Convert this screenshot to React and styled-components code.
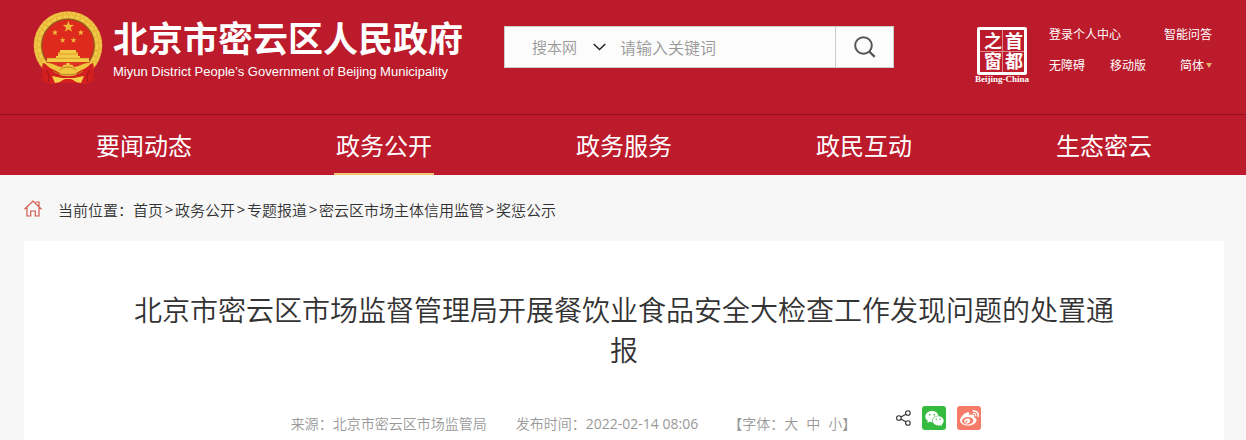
import styled, { createGlobalStyle } from 'styled-components'
import { AiFillWechat } from 'react-icons/ai'
import { FaWeibo } from 'react-icons/fa'

const GlobalStyle = createGlobalStyle`
  * {
    box-sizing: border-box;
  }
  body {
    margin: 0;
    background: #f7f7f7;
    color: #333;
    font-family: 'Open Sans', 'Noto Sans CJK SC', sans-serif;
  }
  a {
    color: inherit;
    text-decoration: none;
  }
`

const Header = styled.header`
  background: #bc1b2c;
  color: #fff;
`
const Top = styled.div`
  display: flex;
  align-items: flex-start;
  height: 114px;
  padding: 10px 34px 0 33px;
`
const Brand = styled.a`
  display: flex;
  gap: 10px;
`
const BrandText = styled.div`
  padding-top: 6px;
`
const SiteName = styled.div`
  font-size: 35px;
  font-weight: 700;
  line-height: 46px;
  white-space: nowrap;
`
const SiteNameEn = styled.div`
  font-family: 'Liberation Sans', Arial, sans-serif;
  font-size: 13px;
  line-height: 20px;
  white-space: nowrap;
`
const SearchForm = styled.form`
  display: flex;
  flex: 0 1 390px;
  height: 42px;
  margin: 16px auto 0 41px;
  background: #fcfcfc;
  border: 1px solid #ccc;
`
const ScopeBox = styled.div`
  display: flex;
  align-items: center;
  padding-left: 27px;
  color: #222;
`
const Scope = styled.select`
  appearance: none;
  width: 61px;
  padding: 0;
  border: 0;
  background: none;
  color: #999;
  font-family: inherit;
  font-size: 15px;
  font-weight: 350;
`
const Keyword = styled.input`
  flex: 1;
  min-width: 0;
  padding: 2px 0 0 14px;
  border: 0;
  background: none;
  font-family: inherit;
  font-size: 16px;
  outline: 0;
  &::placeholder {
    color: #999;
    font-weight: 350;
  }
`
const SearchButton = styled.button`
  display: flex;
  align-items: center;
  justify-content: center;
  width: 58px;
  padding: 0;
  border: 0;
  border-left: 1px solid #ccc;
  background: none;
  cursor: pointer;
`
const Seal = styled.a`
  display: flex;
  flex-direction: column;
  align-items: center;
  width: 56px;
  margin: 17px 19px 0 0;
`
const SealBox = styled.div`
  display: grid;
  grid-template: repeat(2, 1fr) / repeat(2, 1fr);
  width: 50px;
  height: 48px;
  padding: 1px;
  border: 3px solid #fff;
  border-radius: 2px;
  font-size: 18px;
  font-weight: 700;
  line-height: 20px;
  text-align: center;
  writing-mode: vertical-rl;
  background:
    linear-gradient(#dd8d96, #dd8d96) center / 1px 100% no-repeat,
    linear-gradient(#dd8d96, #dd8d96) center / 100% 1px no-repeat;
`
const SealCaption = styled.div`
  font-family: 'Liberation Serif', serif;
  font-size: 9px;
  font-weight: 700;
  line-height: 9px;
  white-space: nowrap;
`
const Tools = styled.div`
  width: 163px;
  padding-top: 15px;
  font-size: 12px;
`
const ToolRow = styled.div`
  display: flex;
  gap: 25px;
  height: 20px;
  margin-bottom: 11px;
  line-height: 20px;
  white-space: nowrap;
  a:last-child {
    margin-left: auto;
  }
`
const Caret = styled.span`
  display: inline-block;
  margin-left: 2px;
  vertical-align: 2px;
  border: solid transparent;
  border-width: 5px 3px 0;
  border-top-color: #e0b070;
`
const Nav = styled.nav`
  display: grid;
  grid-template-columns: repeat(5, 1fr);
  height: 61px;
  padding: 0 22px 0 24px;
  border-top: 1px solid #97101f;
`
const NavLink = styled.a`
  justify-self: center;
  width: 100px;
  height: 60px;
  font-size: 24px;
  line-height: 62px;
  text-align: center;
  box-shadow: ${({ $active }) => ($active ? 'inset 0 -2px #f3c66f' : 'none')};
`

const Main = styled.main`
  padding: 0 22px 0 24px;
`
const Breadcrumb = styled.nav`
  display: flex;
  align-items: center;
  height: 66px;
  padding-top: 2px;
  font-size: 15px;
  font-weight: 350;
  svg {
    margin: 0 16px 2px 0;
  }
`
const Separator = styled.span`
  width: 12px;
  font-weight: 400;
  text-align: center;
`
const Article = styled.article`
  padding: 49px 100px 10px;
  background: #fff;
`
const Title = styled.h1`
  margin: 0;
  font-size: 28px;
  font-weight: 350;
  line-height: 40px;
  text-align: center;
`
const Meta = styled.div`
  display: flex;
  justify-content: center;
  height: 24px;
  margin-top: 36px;
  padding-left: 24px;
  color: #999;
  font-size: 14px;
  font-weight: 350;
  line-height: 36px;
  white-space: nowrap;
`
const Source = styled.span`
  margin-right: 29px;
`
const PublishTime = styled.span`
  margin-right: 30px;
  time {
    font-weight: 400;
  }
`
const FontSizes = styled.span`
  display: flex;
`
const FontSizeButton = styled.button`
  margin: 0 0 0 8px;
  padding: 0;
  border: 0;
  background: none;
  color: inherit;
  font: inherit;
  line-height: 36px;
  cursor: pointer;
  &:first-of-type {
    margin-left: 0;
  }
`
const Share = styled.div`
  display: flex;
  align-items: center;
  gap: 11px;
  height: 24px;
  margin-left: 40px;
  color: #333;
`
const ShareButton = styled.button`
  display: flex;
  align-items: center;
  justify-content: center;
  width: 24px;
  height: 24px;
  padding: 0;
  border: 0;
  border-radius: 3px;
  background: ${({ $color }) => $color};
  color: #fff;
  cursor: pointer;
`

const star = (cx, cy, r) =>
  Array.from({ length: 10 }, (_, i) => {
    const radius = i % 2 ? r * 0.4 : r
    const angle = (Math.PI / 5) * i - Math.PI / 2
    return `${(cx + radius * Math.cos(angle)).toFixed(2)},${(cy + radius * Math.sin(angle)).toFixed(2)}`
  }).join(' ')

const stars = [
  [35.4, 16.8, 6],
  [22, 22.6, 3.2],
  [47.8, 22.6, 3.2],
  [29.7, 30.2, 3.2],
  [40.5, 30.2, 3.2]
]

const Emblem = () => (
  <svg width='70' height='76' viewBox='0 0 70 76' aria-hidden='true'>
    <circle cx='35' cy='35.5' r='34.3' fill='#e8b738' />
    <circle cx='35' cy='35.5' r='32.5' fill='none' stroke='#f0c94c' strokeWidth='2' strokeDasharray='3 1.5' />
    <circle cx='35' cy='35.5' r='29' fill='none' stroke='#f2cd4d' strokeWidth='2.4' strokeDasharray='4 2' />
    <circle cx='35' cy='35.5' r='26.3' fill='#dd2a1c' stroke='#8f5420' strokeWidth='1.2' />
    {stars.map(([x, y, r]) => (
      <polygon key={x} points={star(x, y, r)} fill='#f0b93a' />
    ))}
    <path d='M27 40h16v2.500h2V46H25v-3.500h2zM23 46h24v2H23zM14 48h42v4H14z' fill='#f3cb45' />
    <path d='M25 44h20M14 48.300h42' stroke='#d8942c' strokeWidth='.8' />
    <path d='M13 52h44l-4 7H17z' fill='#dd3322' />
    <path d='M10 53c8 3 14 5 17 10l-3 10c-3 2-8 1-13-1l-1-3-2 2C11 65 8 59 10 53zM60 53c-8 3-14 5-17 10l3 10c3 2 8 1 13-1l1-3 2 2c-3-6 0-12-2-18z' fill='#d31f1d' />
    <path d='M13 60c3 4 4 7 2 12M57 60c-3 4-4 7-2 12' fill='none' stroke='#9c131c' strokeWidth='1' />
    <path d='M12 53c7-1 11 4 17 4l2-2.500 2 .5.500-2h3l.5 2 2-.5 2 2.500c6 0 10-5 17-4-3 5-8 6-13 9-3 2-6 2-10 2s-7 0-10-2c-5-3-10-4-13-9z' fill='#f1c540' />
    <path d='M27 60c3-4 13-4 16 0M20 61c6 5 24 5 30 0' fill='none' stroke='#c07a22' strokeWidth='1' />
    <path d='M24 64c7 3 15 3 22 0l2 4-3 5H25l-3-5z' fill='#d31f1d' />
    <path d='M19 66l10 2c4 0 8 0 12 0l10-2-3 7c-5 0-7-3-10-4h-6c-3 1-5 4-10 4z' fill='#f6cf48' />
  </svg>
)

const HomeIcon = () => (
  <svg width='18' height='17' viewBox='0 0 18 17' fill='none' stroke='#d25a4c' strokeWidth='1.2' aria-hidden='true'>
    <path d='M.5 9.200L9 1l8.500 8.200M3 7.500V16h3.700v-5h4.600v5H15V7.500M11.500 2h3.500v4' />
  </svg>
)

const ShareIcon = () => (
  <svg width='15' height='16' viewBox='0 0 15 16' fill='none' stroke='#333' strokeWidth='1.1' aria-hidden='true'>
    <circle cx='2.900' cy='8' r='2.300' />
    <circle cx='11.900' cy='3' r='2.300' />
    <circle cx='11.900' cy='13' r='2.300' />
    <path d='M5 7l4.800-2.800M5 9l4.800 2.800' />
  </svg>
)

const navItems = ['要闻动态', '政务公开', '政务服务', '政民互动', '生态密云']
const crumbs = ['首页', '政务公开', '专题报道', '密云区市场主体信用监管', '奖惩公示']

const App = () => {
  return (
    <>
      <GlobalStyle />
      <Header>
        <Top>
          <Brand href='#'>
            <Emblem />
            <BrandText>
              <SiteName>北京市密云区人民政府</SiteName>
              <SiteNameEn>Miyun District People’s Government of Beijing Municipality</SiteNameEn>
            </BrandText>
          </Brand>
          <SearchForm onSubmit={(e) => e.preventDefault()}>
            <ScopeBox>
              <Scope aria-label='搜索范围'>
                <option>搜本网</option>
              </Scope>
              <svg width='13' height='8' viewBox='0 0 13 8' fill='none' stroke='currentColor' strokeWidth='1.400' aria-hidden='true'>
                <path d='M.7 1l5.800 5.500L12.300 1' />
              </svg>
            </ScopeBox>
            <Keyword type='text' placeholder='请输入关键词' aria-label='关键词' />
            <SearchButton aria-label='搜索'>
              <svg width='22' height='22' viewBox='0 0 22 22' fill='none' stroke='#555' strokeWidth='2' aria-hidden='true'>
                <circle cx='9.500' cy='9.500' r='8.300' />
                <path d='M15.200 15.500l5.500 5.300' strokeWidth='2.400' />
              </svg>
            </SearchButton>
          </SearchForm>
          <Seal href='#'>
            <SealBox>
              <span>首</span>
              <span>都</span>
              <span>之</span>
              <span>窗</span>
            </SealBox>
            <SealCaption>Beijing-China</SealCaption>
          </Seal>
          <Tools>
            <ToolRow>
              <a href='#'>登录个人中心</a>
              <a href='#'>智能问答</a>
            </ToolRow>
            <ToolRow>
              <a href='#'>无障碍</a>
              <a href='#'>移动版</a>
              <a href='#'>
                简体
                <Caret />
              </a>
            </ToolRow>
          </Tools>
        </Top>
        <Nav>
          {navItems.map((item, index) => (
            <NavLink key={item} href='#' $active={index === 1}>
              {item}
            </NavLink>
          ))}
        </Nav>
      </Header>
      <Main>
        <Breadcrumb>
          <HomeIcon />
          <span>当前位置：</span>
          {crumbs.flatMap((item, index) => [
            index > 0 && <Separator key={`${item}-separator`}>&gt;</Separator>,
            <a key={item} href='#'>
              {item}
            </a>
          ])}
        </Breadcrumb>
        <Article>
          <Title>北京市密云区市场监督管理局开展餐饮业食品安全大检查工作发现问题的处置通报</Title>
          <Meta>
            <Source>来源：北京市密云区市场监管局</Source>
            <PublishTime>
              发布时间：<time>2022-02-14 08:06</time>
            </PublishTime>
            <FontSizes>
              【字体：
              <FontSizeButton>大</FontSizeButton>
              <FontSizeButton>中</FontSizeButton>
              <FontSizeButton>小</FontSizeButton>】
            </FontSizes>
            <Share>
              <ShareIcon />
              <ShareButton $color='#35bb3f' aria-label='微信'>
                <AiFillWechat size={21} />
              </ShareButton>
              <ShareButton $color='#f77b69' aria-label='微博'>
                <FaWeibo size={19} />
              </ShareButton>
            </Share>
          </Meta>
        </Article>
      </Main>
    </>
  )
}

export default App
